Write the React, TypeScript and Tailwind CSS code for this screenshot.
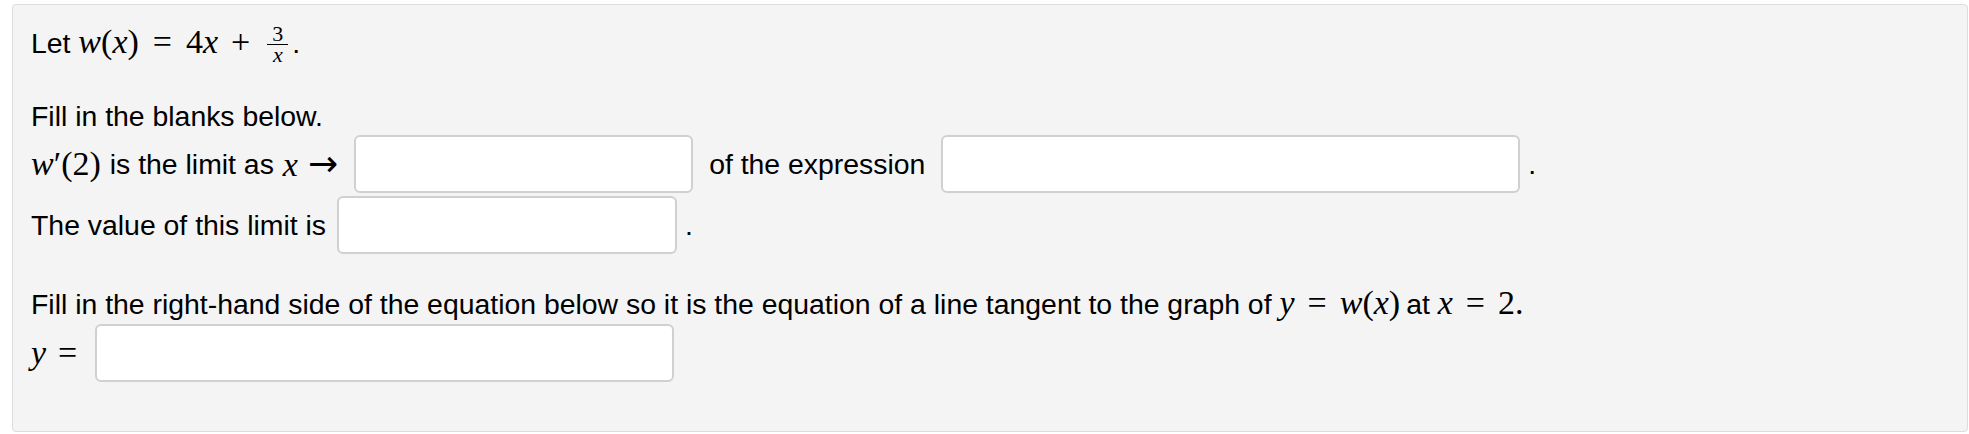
import React from 'react';

// Tarefa de cálculo: derivada como limite + reta tangente

const math = "font-['Liberation_Serif','Times_New_Roman',serif] text-[34px]";

function V({ c }: { c: string }) {
  return <span className="italic">{c}</span>;
}

function Blank({ w }: { w: string }) {
  return (
    <input
      type="text"
      className={`h-[58px] ${w} rounded-[6px] border-2 border-[#d0d0d0] bg-white outline-none`}
    />
  );
}

function Frac() {
  return (
    <span className="mx-[4px] inline-flex flex-col items-center align-[12px] text-[22px] leading-[20px]">
      <span className="px-[5px]">3</span>
      <span className="h-[1px] w-full bg-black" />
      <span className="italic">x</span>
    </span>
  );
}

function Arrow() {
  return <span className="ml-[10px] font-['DejaVu_Sans',sans-serif] text-[36px] not-italic">→</span>;
}

export default function App() {
  return (
    <div className="min-h-[434px] bg-white pt-[4px] pl-[12px] font-['Liberation_Sans',Arial,sans-serif] text-[28.4px] leading-[32px] text-black">
      <div className="box-border h-[428px] w-[1956px] rounded-[4px] border border-[#dcdcdc] bg-[#f4f4f4] px-[18px] pt-[19px]">
        {/* enunciado */}
        <p>
          Let{' '}
          <span className={math}>
            <V c="w" />(<V c="x" />)<span className="mx-[14px]">=</span>4<V c="x" />
            <span className="mx-[13px]">+</span>
            <Frac />
          </span>
          .
        </p>

        <p className="mt-[35px]">Fill in the blanks below.</p>

        {/* limite */}
        <div className="mt-[3px] flex h-[58px] items-center">
          <span className={math}>
            <V c="w" />′(2)
          </span>
          <span className="ml-[9px]">is the limit as</span>
          <span className={`${math} ml-[9px]`}>
            <V c="x" />
            <Arrow />
          </span>
          <span className="ml-[16px]">
            <Blank w="w-[339px]" />
          </span>
          <span className="mx-[16px]">of the expression</span>
          <Blank w="w-[579px]" />
          <span className="ml-[8px]">.</span>
        </div>

        <div className="mt-[3px] flex h-[58px] items-center">
          <span>The value of this limit is</span>
          <span className="ml-[11px]">
            <Blank w="w-[340px]" />
          </span>
          <span className="ml-[8px]">.</span>
        </div>

        {/* reta tangente */}
        <p className="mt-[33px]">
          Fill in the right-hand side of the equation below so it is the equation of a line tangent to the graph of{' '}
          <span className={math}>
            <V c="y" />
            <span className="mx-[13px]">=</span>
            <V c="w" />(<V c="x" />)
          </span>
          <span className="ml-[6px]">at</span>{' '}
          <span className={math}>
            <V c="x" />
            <span className="mx-[13px]">=</span>2.
          </span>
        </p>

        <div className="mt-[4px] flex h-[58px] items-center">
          <span className={math}>
            <V c="y" />
            <span className="ml-[12px]">=</span>
          </span>
          <span className="ml-[18px]">
            <Blank w="w-[579px]" />
          </span>
        </div>
      </div>
    </div>
  );
}
